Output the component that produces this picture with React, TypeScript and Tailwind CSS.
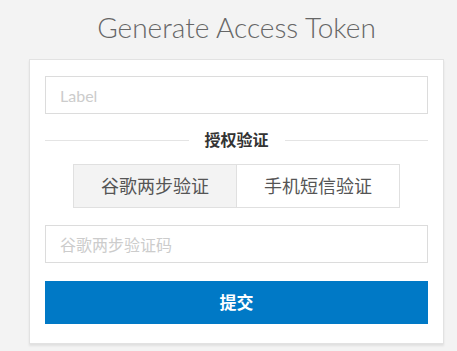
export default function App() {
  return (
    <div
      className="h-[351px] w-[457px] overflow-hidden bg-[#f3f3f3]"
      style={{ fontFamily: 'Lato, "Noto Sans CJK SC", sans-serif' }}
    >
      <h1 className="ml-[29px] w-[415px] pt-[7px] text-center text-[28px] font-light leading-[40px] text-[#666]">
        Generate Access Token
      </h1>

      <div className="ml-[29px] mt-[12px] h-[285px] w-[415px] border border-[#e2e2e2] bg-white px-[15px] pt-[16px] shadow-[0_2px_2px_rgba(0,0,0,0.08)]">
        <input
          placeholder="Label"
          className="block h-[38px] w-full border border-[#dcdcdc] px-[14px] text-[16px] text-[#333] outline-none placeholder:text-[#ccc]"
        />

        <div className="mt-[15px] flex items-center gap-[16px]">
          <div className="h-px flex-1 bg-[#e4e4e4]" />
          <span className="text-[16px] font-bold leading-[22px] text-[#333]">授权验证</span>
          <div className="h-px flex-1 bg-[#e4e4e4]" />
        </div>

        <div className="mx-[28px] mt-[13px] flex h-[44px] border border-[#e0e0e0]">
          <button className="flex-1 border-r border-[#e0e0e0] bg-[#f3f3f3] text-[18px] text-[#555]">
            谷歌两步验证
          </button>
          <button className="flex-1 bg-white text-[18px] text-[#555]">手机短信验证</button>
        </div>

        <input
          placeholder="谷歌两步验证码"
          className="mt-[17px] block h-[38px] w-full border border-[#dcdcdc] px-[14px] text-[16px] text-[#333] outline-none placeholder:text-[#ccc]"
        />

        <button className="mt-[18px] block h-[43px] w-full bg-[#0079c6] text-[17px] font-bold text-white">
          提交
        </button>
      </div>
    </div>
  );
}
